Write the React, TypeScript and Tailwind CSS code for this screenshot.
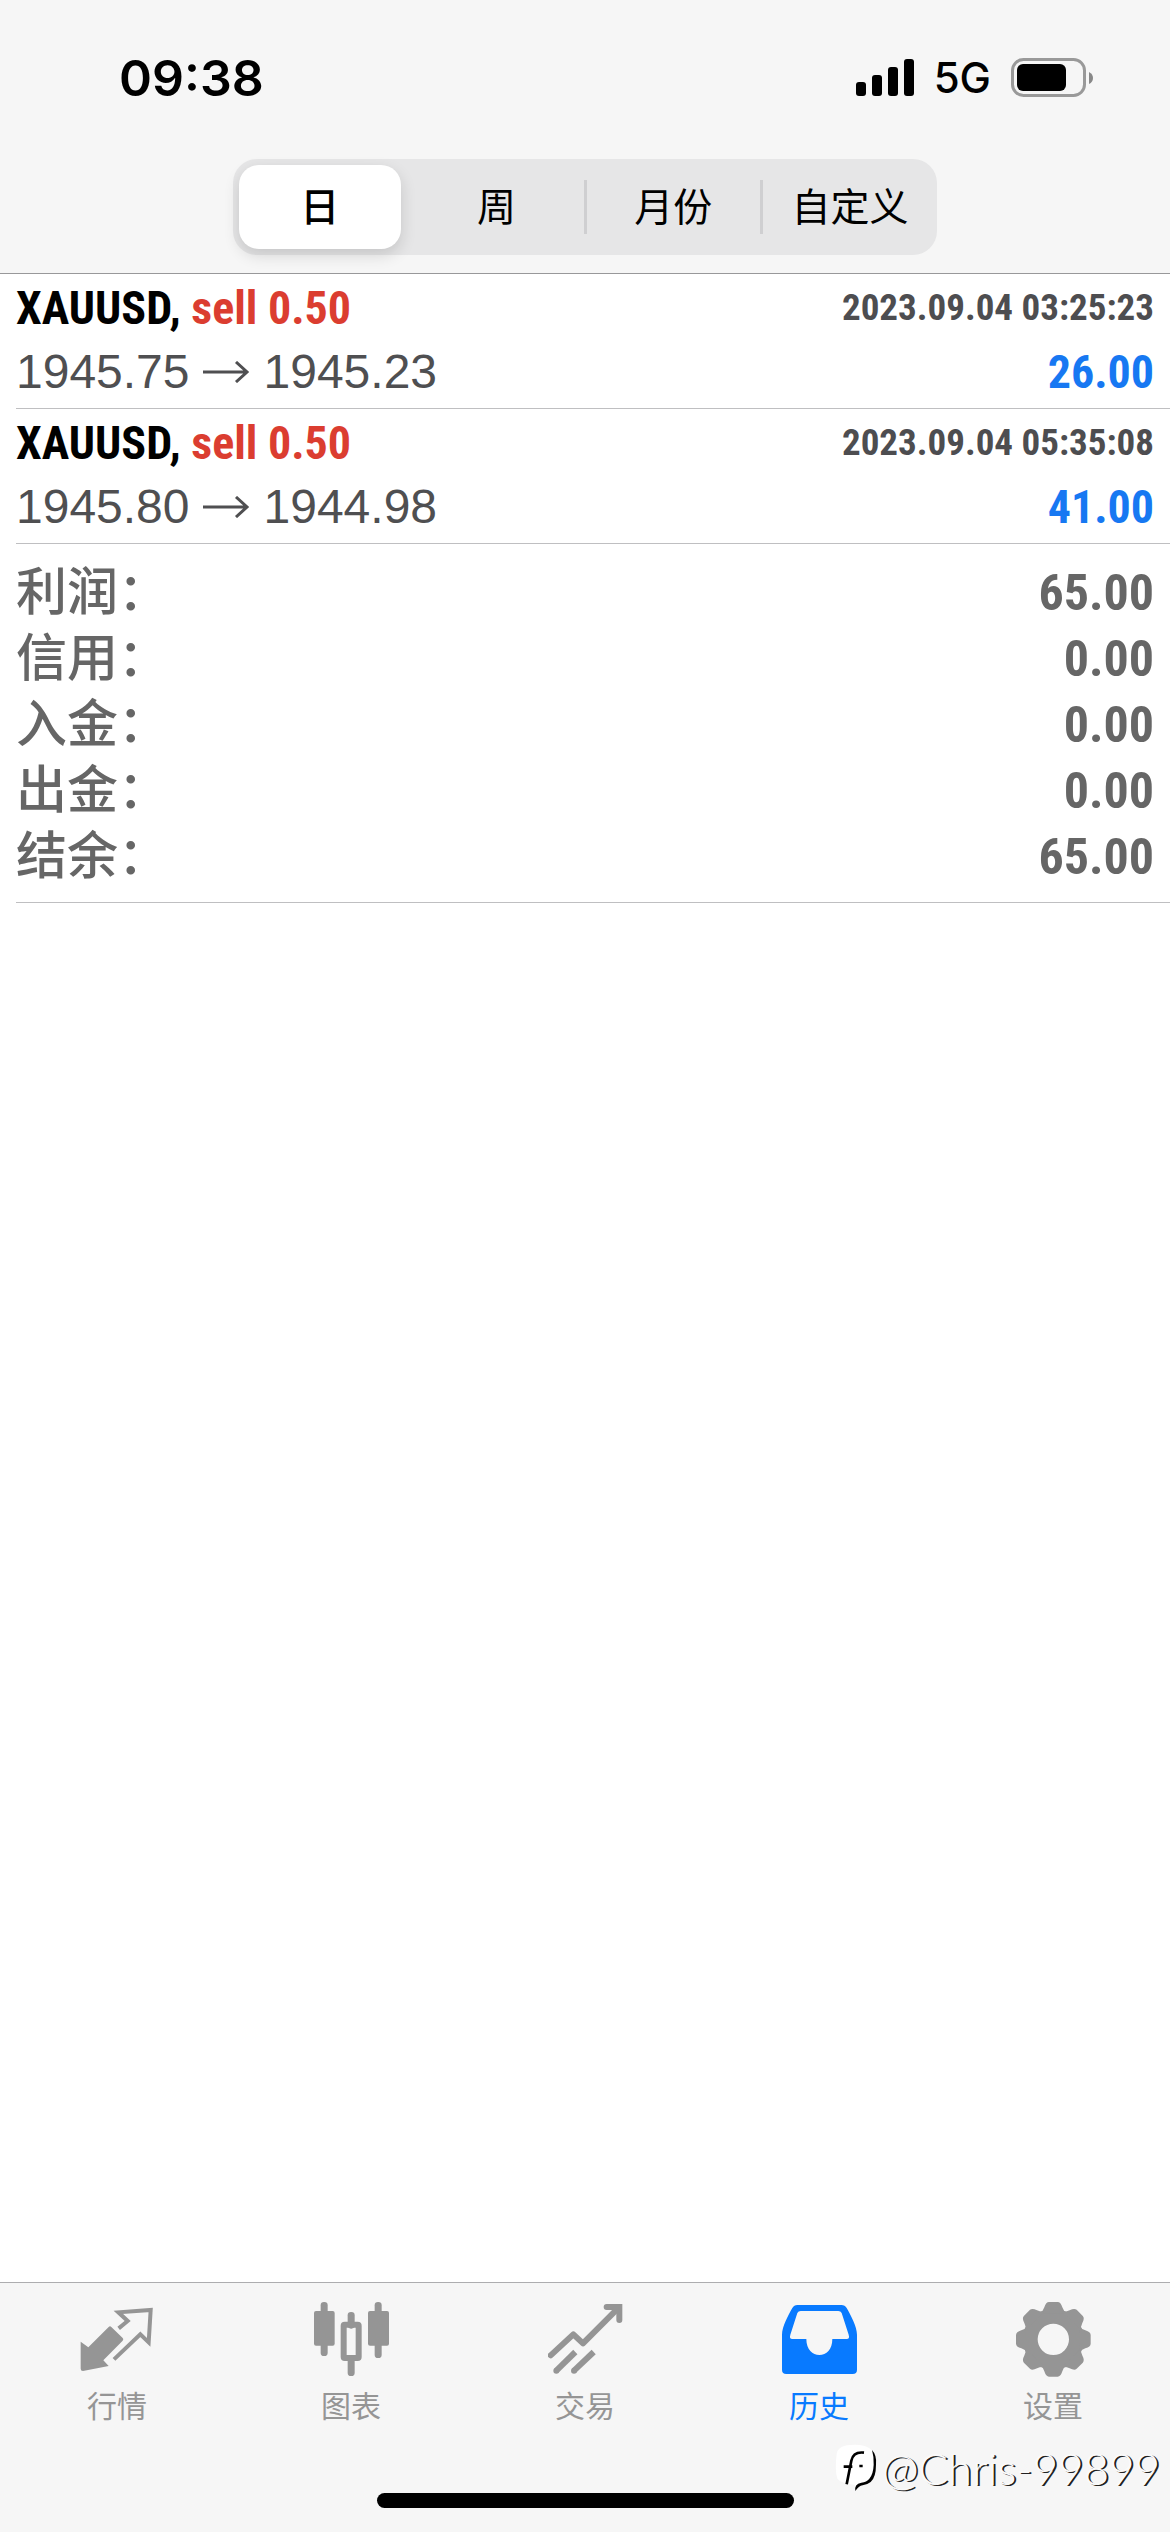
import { Fragment, useState } from 'react';
import type { ReactNode } from 'react';
import clsx from 'clsx';

interface Deal {
  symbol: string;
  side: string;
  open: string;
  close: string;
  time: string;
  profit: string;
}

const periods = ['日', '周', '月份', '自定义'];

const deals: Deal[] = [
  { symbol: 'XAUUSD', side: 'sell 0.50', open: '1945.75', close: '1945.23', time: '2023.09.04 03:25:23', profit: '26.00' },
  { symbol: 'XAUUSD', side: 'sell 0.50', open: '1945.80', close: '1944.98', time: '2023.09.04 05:35:08', profit: '41.00' },
];

const summary = [
  { label: '利润：', value: '65.00' },
  { label: '信用：', value: '0.00' },
  { label: '入金：', value: '0.00' },
  { label: '出金：', value: '0.00' },
  { label: '结余：', value: '65.00' },
];

const gearAngles = [0, 45, 90, 135, 180, 225, 270, 315];

function TabIcon({ children }: { children: ReactNode }) {
  return (
    <svg viewBox="0 0 225 225" className="size-[75px]" fill="currentColor" aria-hidden="true">
      {children}
    </svg>
  );
}

function QuotesIcon() {
  return (
    <TabIcon>
      <path d="M2 119 L25 136 L86 75 Q90 71 94 75 L128 108 Q132 112 128 116 L70 175 L86 192 L9 207 Q2 207 2 200 Z" />
      <path d="M116 79 L143 57 L115 31 L212 24 L206 121 L181 97 L102 172" fill="none" stroke="currentColor" strokeWidth="12" />
    </TabIcon>
  );
}

function ChartIcon() {
  return (
    <TabIcon>
      <rect x="20" y="0" width="21" height="162" rx="10" />
      <rect x="0" y="27" width="62" height="104" rx="6" />
      <rect x="182" y="0" width="21" height="168" rx="10" />
      <rect x="162" y="27" width="63" height="104" rx="6" />
      <rect x="101" y="30" width="21" height="50" rx="10" />
      <rect x="101" y="165" width="21" height="57" rx="10" />
      <rect x="89" y="68" width="45" height="100" rx="3" fill="none" stroke="currentColor" strokeWidth="18" />
    </TabIcon>
  );
}

function TradeIcon() {
  return (
    <TabIcon>
      <g fill="none" stroke="currentColor" strokeWidth="18" strokeLinecap="round" strokeLinejoin="round">
        <path d="M8 160 L76 97 L105 124 L212 17" />
        <path d="M176 15 H214 V54" strokeLinejoin="miter" />
      </g>
      <g stroke="currentColor" strokeWidth="18">
        <path d="M25 206 L82 150" />
        <path d="M78 206 L137 150" />
      </g>
      <circle cx="25" cy="206" r="9" />
      <circle cx="78" cy="206" r="9" />
    </TabIcon>
  );
}

function HistoryIcon() {
  return (
    <TabIcon>
      <path
        fillRule="evenodd"
        d="M46 9 H178 Q189 9 194 18 C206 39 225 74 225 98 V203 Q225 216 212 216 H13 Q0 216 0 203 V98 C0 74 19 39 31 18 Q36 9 46 9 Z M56 27 Q49 27 46 33 L25 98 Q21 111 31 111 H73 C73 143 92 159 112 159 C133 159 151 143 151 111 H194 Q204 111 200 98 L179 33 Q176 27 169 27 Z"
      />
    </TabIcon>
  );
}

function SettingsIcon() {
  return (
    <TabIcon>
      <g transform="translate(112 112)">
        <circle r="69" fill="none" stroke="currentColor" strokeWidth="44" />
        {gearAngles.map((angle) => (
          <path
            key={angle}
            transform={`rotate(${angle})`}
            d="M-40 -78 Q-31 -84 -27 -96 Q-22 -112 -13 -112 H13 Q22 -112 27 -96 Q31 -84 40 -78 Z"
          />
        ))}
      </g>
    </TabIcon>
  );
}

const tabs = [
  { label: '行情', icon: <QuotesIcon /> },
  { label: '图表', icon: <ChartIcon /> },
  { label: '交易', icon: <TradeIcon /> },
  { label: '历史', icon: <HistoryIcon /> },
  { label: '设置', icon: <SettingsIcon /> },
];

function StatusBar() {
  return (
    <div className="flex h-[159px] items-center justify-between pr-[76px] pb-1 pl-[119px] font-['Inter',sans-serif]">
      <span className="text-[50px] leading-[60px] font-semibold">09:38</span>
      <div className="flex items-center gap-5">
        <svg viewBox="0 0 58 38" className="h-[38px] w-[58px]" aria-hidden="true">
          <rect x="0" y="23" width="10" height="14" rx="3" />
          <rect x="16" y="16" width="10" height="21" rx="3" />
          <rect x="32" y="8" width="10" height="29" rx="3" />
          <rect x="48" y="0" width="10" height="37" rx="3" />
        </svg>
        <span className="text-[42px] leading-[60px] font-medium">5G</span>
        <svg viewBox="0 0 83 40" className="h-[40px] w-[83px]" aria-hidden="true">
          <rect x="1.5" y="1.5" width="72" height="36" rx="11" fill="none" stroke="#999" strokeWidth="3" />
          <rect x="6" y="6" width="49" height="27" rx="6" />
          <path d="M78 14 Q82 16 82 20 Q82 24 78 26 Z" fill="#888" />
        </svg>
      </div>
    </div>
  );
}

function PeriodPicker() {
  const [active, setActive] = useState(0);

  return (
    <div className="flex h-24 w-full max-w-[704px] items-center rounded-[24px] bg-[#e6e6e7] p-[6px]">
      {periods.map((period, index) => (
        <Fragment key={period}>
          {index > 0 && (
            <span
              className={clsx('mx-[6px] h-[54px] w-[3px] shrink-0', active === index || active === index - 1 ? 'bg-transparent' : 'bg-[#cfcfd1]')}
            />
          )}
          <button
            type="button"
            aria-pressed={active === index}
            onClick={() => setActive(index)}
            className={clsx(
              'h-full flex-1 basis-0 rounded-[20px] pt-[2px] text-[39px] leading-[60px] whitespace-nowrap',
              active === index ? 'bg-white font-medium shadow-[0_6px_16px_rgba(0,0,0,0.14)]' : 'font-normal',
            )}
          >
            {period}
          </button>
        </Fragment>
      ))}
    </div>
  );
}

function DealRow({ deal }: { deal: Deal }) {
  return (
    <li className="ml-4 border-b border-[#bfbfc1] pt-[2px] pr-4 pb-1">
      <div className="flex items-center justify-between font-['Roboto_Condensed',sans-serif] font-bold">
        <span className="text-[46px] leading-[64px]">
          {deal.symbol}, <span className="text-[#db3d30]">{deal.side}</span>
        </span>
        <time className="text-[37px] leading-[64px] text-[#4d4d50]">{deal.time}</time>
      </div>
      <div className="flex items-center justify-between">
        <span className="flex items-center gap-3 text-[48px] leading-[64px] text-[#4f4f51]">
          {deal.open}
          <svg viewBox="0 0 50 22" className="h-[22px] w-[50px]" fill="none" stroke="currentColor" strokeWidth="3" role="img" aria-label="→">
            <path d="M1 11 H44 M34 1 L45 11 L34 21" />
          </svg>
          {deal.close}
        </span>
        <span className="font-['Roboto_Condensed',sans-serif] text-[46px] leading-[64px] font-bold text-[#1778f2]">
          {deal.profit}
        </span>
      </div>
    </li>
  );
}

function Watermark() {
  return (
    <div className="absolute right-[10px] bottom-9 flex items-center gap-1">
      <svg viewBox="0 0 132 144" className="h-[48px] w-[44px]" aria-hidden="true">
        <path d="M8 30 Q10 2 62 2 Q124 2 124 50 Q126 112 92 117 Q76 117 67 135 L62 122 Q20 118 10 104 Q2 80 8 30 Z" fill="#fff" />
        <path d="M114 18 Q129 34 126 62 Q126 100 110 114 Q100 122 86 124 Q74 126 64 141 Q60 120 82 116 Q98 114 106 104 Q118 90 119 62 Q120 38 114 18 Z" />
        <path d="M90 26 Q58 22 52 50 L38 121 M29 68 H55 M76 66 H86" fill="none" stroke="#000" strokeWidth="8" />
      </svg>
      <span className="font-['Lato',sans-serif] text-[44px] leading-[56px] font-light text-[#fafafa] [text-shadow:2px_1px_0_#222]">
        @Chris-99899
      </span>
    </div>
  );
}

export default function App() {
  const [tab, setTab] = useState(3);

  return (
    <div
      lang="zh-CN"
      className="relative flex min-h-screen flex-col bg-white font-['Liberation_Sans','Noto_Sans_CJK_SC',sans-serif] text-black"
    >
      <header className="border-b border-[#98989a] bg-[#f6f6f6]">
        <StatusBar />
        <div className="flex justify-center pb-[18px]">
          <PeriodPicker />
        </div>
      </header>

      <main className="flex-1">
        <ul>
          {deals.map((deal) => (
            <DealRow key={deal.time} deal={deal} />
          ))}
        </ul>

        <dl className="ml-4 border-b border-[#bfbfc1] pt-4 pr-4 pb-3 text-[#666]">
          {summary.map((item) => (
            <div key={item.label} className="flex items-center justify-between">
              <dt className="text-[51px] leading-[66px] font-medium">{item.label}</dt>
              <dd className="font-['Roboto_Condensed',sans-serif] text-[50px] leading-[66px] font-bold">{item.value}</dd>
            </div>
          ))}
        </dl>
      </main>

      <footer className="border-t border-[#adadaf] bg-[#f6f6f6]">
        <nav className="flex pt-[19px]">
          {tabs.map((item, index) => (
            <button
              key={item.label}
              type="button"
              onClick={() => setTab(index)}
              className={clsx('flex flex-1 flex-col items-center gap-2', tab === index ? 'text-[#087aff]' : 'text-[#959595]')}
            >
              {item.icon}
              <span className="text-[30px] leading-[44px]">{item.label}</span>
            </button>
          ))}
        </nav>
        <div className="flex justify-center pt-16 pb-6">
          <div className="h-[15px] w-[417px] rounded-full bg-black" />
        </div>
      </footer>

      <Watermark />
    </div>
  );
}
